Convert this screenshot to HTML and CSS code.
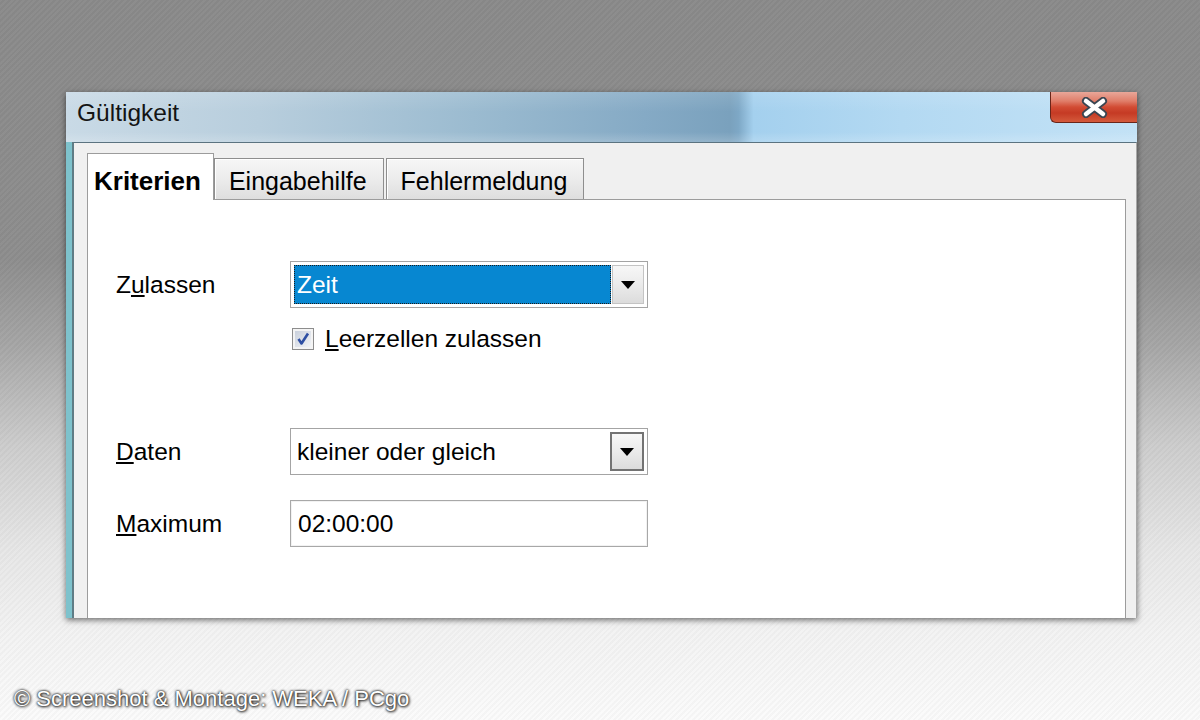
FILE: index.html
```html
<!DOCTYPE html>
<html lang="de">
<head>
  <meta charset="UTF-8">
  <meta name="viewport" content="width=device-width, initial-scale=1.0">
  <title>Gültigkeit</title>
  <link rel="stylesheet" href="styles.css">
</head>
<body>
  <div class="stage">
    <div class="window">
      <div class="titlebar">
        <span class="title">Gültigkeit</span>
        <button class="close" aria-label="Schließen">
          <svg width="27" height="21" viewBox="0 0 27 21">
            <path d="M5 4 L22 17 M22 4 L5 17" stroke="#3b4652" stroke-width="8" stroke-linecap="round" fill="none"/>
            <path d="M5 4 L22 17 M22 4 L5 17" stroke="#ffffff" stroke-width="4.5" stroke-linecap="round" fill="none"/>
          </svg>
        </button>
      </div>

      <div class="frame">
        <div class="client">
          <div class="tabs">
            <div class="tab active">Kriterien</div>
            <div class="tab">Eingabehilfe</div>
            <div class="tab">Fehlermeldung</div>
          </div>

          <div class="panel">
            <div class="row">
              <span class="label">Z<u>u</u>lassen</span>
              <div class="select focused">
                <span class="value">Zeit</span>
                <span class="arrow">
                  <svg width="14" height="8" viewBox="0 0 14 8"><polygon points="0,0 14,0 7,8" fill="#000"/></svg>
                </span>
              </div>
            </div>

            <div class="check-row">
              <span class="checkbox">
                <svg width="22" height="22" viewBox="0 0 22 22">
                  <defs>
                    <linearGradient id="cb" x1="0" y1="0" x2="1" y2="1">
                      <stop offset="0" stop-color="#c9d0dc"/>
                      <stop offset="1" stop-color="#f2f4f7"/>
                    </linearGradient>
                  </defs>
                  <rect x="0.5" y="0.5" width="21" height="21" fill="#f4f4f4" stroke="#8d8d8d"/>
                  <rect x="3" y="3" width="16" height="16" fill="url(#cb)"/>
                  <path d="M6.5 11 L9.5 15.5 L16 5.5" stroke="#2e4fa3" stroke-width="2.6" fill="none" stroke-linejoin="round"/>
                </svg>
              </span>
              <span class="check-label"><u>L</u>eerzellen zulassen</span>
            </div>

            <div class="row row-daten">
              <span class="label"><u>D</u>aten</span>
              <div class="select">
                <span class="value">kleiner oder gleich</span>
                <span class="arrow arrow-dark">
                  <svg width="14" height="8" viewBox="0 0 14 8"><polygon points="0,0 14,0 7,8" fill="#000"/></svg>
                </span>
              </div>
            </div>

            <div class="row row-max">
              <span class="label"><u>M</u>aximum</span>
              <div class="input">02:00:00</div>
            </div>
          </div>
        </div>
      </div>
    </div>

    <div class="credit">© Screenshot &amp; Montage: WEKA / PCgo</div>
  </div>
</body>
</html>
```

FILE: styles.css
```css
body {
  margin: 0;
  width: 1200px;
  height: 720px;
  overflow: hidden;
  font-family: "Liberation Sans", Arial, sans-serif;
  background:
    repeating-linear-gradient(135deg, rgba(255, 255, 255, 0.025) 0 2px, rgba(0, 0, 0, 0.025) 2px 4px),
    linear-gradient(to bottom, #8a8a8a 0%, #8d8d8d 36%, #a6a6a6 48%, #cdcdcd 62%, #e6e6e6 76%, #f3f3f3 88%, #fbfbfb 100%);
}

.stage {
  height: 720px;
  box-sizing: border-box;
  padding: 92px 63px 0 66px;
  display: flex;
  flex-direction: column;
}

/* Fenster */
.window {
  height: 526px;
  display: flex;
  flex-direction: column;
  overflow: hidden;
  box-shadow: 0 2px 6px rgba(0, 0, 0, 0.55);
}

.titlebar {
  height: 50px;
  flex: none;
  display: flex;
  align-items: flex-start;
  background:
    linear-gradient(to bottom, rgba(255, 255, 255, 0.12) 0%, rgba(255, 255, 255, 0) 40%, rgba(255, 255, 255, 0) 80%, rgba(255, 255, 255, 0.18) 100%),
    linear-gradient(to right, #c9dae6 0%, #b8cedd 18%, #9bbbd0 38%, #85aac5 54%, #7aa1bd 62%, #7ea8c6 62.8%, #a4d0ee 64.2%, #b3d9f2 78%, #c3e2f6 100%);
}

.title {
  margin: 8px 0 0 11px;
  font-size: 24.5px;
  line-height: 26px;
  color: #141414;
}

.close {
  margin-left: auto;
  width: 87px;
  height: 31px;
  padding: 0;
  border: 1px solid #6a2519;
  border-top: none;
  border-right: none;
  border-radius: 0 0 0 6px;
  background: linear-gradient(to bottom, #e9a799 0%, #e07e6a 30%, #d24c34 50%, #c53a24 70%, #d45a3c 100%);
  display: flex;
  align-items: center;
  justify-content: center;
}

.frame {
  flex: 1;
  display: flex;
  border-left: 6px solid #7ec2cc;
}

.client {
  flex: 1;
  display: flex;
  flex-direction: column;
  background-color: #f0f0f0;
  border-left: 2px solid #5f7c85;
  border-top: 1px solid #5b7380;
  border-right: 1px solid #a8a8a8;
  padding: 10px 10px 0 13px;
}

/* Reiter */
.tabs {
  height: 46px;
  flex: none;
  display: flex;
  align-items: flex-end;
  gap: 2px;
}

.tab {
  height: 41px;
  box-sizing: border-box;
  padding: 4px 16px 0 14px;
  line-height: 36px;
  font-size: 25px;
  color: #000;
  border: 1px solid #8e8e8e;
  border-bottom: none;
  background: linear-gradient(to bottom, #f6f6f6 0%, #ececec 50%, #dedede 100%);
  box-shadow: inset 1px 1px 0 #ffffff;
}

.tab.active {
  position: relative;
  z-index: 1;
  height: 47px;
  margin-bottom: -1px;
  margin-right: -2px;
  padding: 9px 12px 0 6px;
  font-size: 26px;
  font-weight: bold;
  background: #ffffff;
  border-color: #9c9c9c;
  box-shadow: none;
}

.panel {
  flex: 1;
  background-color: #ffffff;
  border: 1px solid #9c9c9c;
  border-bottom: none;
  padding: 61px 0 0 28px;
}

/* Formular */
.row {
  display: flex;
  align-items: center;
}

.label {
  width: 174px;
  font-size: 24.5px;
  color: #000;
}

.select {
  width: 358px;
  height: 47px;
  box-sizing: border-box;
  border: 1px solid #a4a4a4;
  padding: 3px;
  display: flex;
  gap: 1px;
}

.value {
  flex: 1;
  border: 1px solid transparent;
  padding-left: 2px;
  font-size: 24.5px;
  line-height: 37px;
  color: #000;
}

.focused .value {
  background-color: #0787d1;
  color: #ffffff;
  border: 1px dotted #1c1c1c;
}

.arrow {
  width: 32px;
  box-sizing: border-box;
  border: 1px solid #c4c4c4;
  background: linear-gradient(to bottom, #f7f7f7 0%, #ebebeb 50%, #dcdcdc 100%);
  display: flex;
  align-items: center;
  justify-content: center;
}

.arrow-dark {
  width: 34px;
  border: 2px solid #737373;
}

.check-row {
  display: flex;
  align-items: center;
  height: 22px;
  margin-top: 20px;
  padding-left: 176px;
  gap: 11px;
}

.checkbox {
  width: 22px;
  height: 22px;
  display: flex;
}

.check-label {
  font-size: 24.5px;
  line-height: 22px;
  color: #000;
}

.row-daten {
  margin-top: 78px;
}

.row-max {
  margin-top: 25px;
}

.input {
  width: 358px;
  height: 47px;
  box-sizing: border-box;
  border: 1px solid #a8a8a8;
  box-shadow: inset 0 0 0 1px #f2f2f2;
  padding-left: 7px;
  font-size: 24.5px;
  line-height: 45px;
  color: #000;
}

/* Bildnachweis */
.credit {
  margin-top: auto;
  margin-left: -52px;
  padding-bottom: 9px;
  font-size: 22px;
  line-height: 25px;
  color: #ffffff;
  text-shadow: 0 0 2px #1a1a1a, 0 0 3px #333333, 1px 1px 3px rgba(0, 0, 0, 0.7);
}
```
